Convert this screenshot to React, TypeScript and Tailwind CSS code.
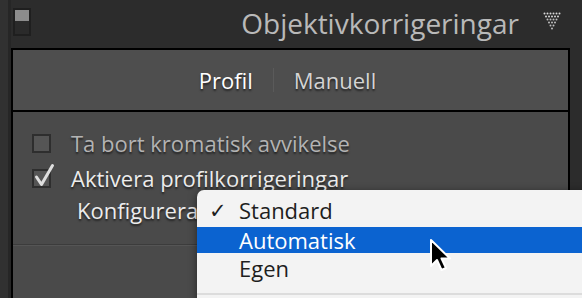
import React from "react";

const shadow = "[text-shadow:0_2px_2px_rgba(0,0,0,0.55)]";

const Checkbox = ({ checked }: { checked?: boolean }) => (
  <div className="relative w-[19px] h-[19px] border-2 border-[#2e2e2e] bg-[#555555] shrink-0">
    {checked && (
      <svg className="absolute -top-[8px] left-[0px]" width="22" height="24" viewBox="0 0 22 24">
        <path d="M2.5 14 L7.5 21.5 L18.5 2.5" fill="none" stroke="#dedede" strokeWidth="3" strokeLinecap="round" strokeLinejoin="round" />
      </svg>
    )}
  </div>
);

const DottedTriangle = () => {
  const dots: React.ReactElement[] = [];
  for (let r = 0; r < 6; r++) {
    for (let c = 0; c < 6 - r; c++) {
      dots.push(<circle key={`${r}-${c}`} cx={1.5 + c * 3 + r * 1.5} cy={1.5 + r * 3} r="1" fill={r < 2 ? "#d8d8d8" : "#bdbdbd"} />);
    }
  }
  return (
    <svg width="19" height="18" viewBox="0 0 19 18">
      {dots}
    </svg>
  );
};

const Cursor = () => (
  <svg width="26" height="38" viewBox="0 0 26 38">
    <path d="M2 2 L2 28 L8 22 L12.5 32 L17 30 L12.5 20.5 L21 20.5 Z" fill="#000" stroke="#fff" strokeWidth="2" strokeLinejoin="round" />
  </svg>
);

export default function App() {
  return (
    <div
      className="relative w-[582px] h-[298px] overflow-hidden bg-[#2c2c2c] flex"
      style={{ fontFamily: "'Open Sans', Lato, sans-serif" }}
    >
      <div className="w-[11px] shrink-0 bg-[#313131] border-r-[3px] border-[#262626]" />
      <div className="flex-1 flex flex-col">
        <div className="h-[48px] flex items-start shrink-0">
          <div className="mt-[8px] ml-[2px] w-[18px] h-[28px] border-2 border-[#1f1f1f] flex flex-col">
            <div className="h-[11px] bg-[#8c8c8c]" />
            <div className="flex-1 bg-[#2a2a2a]" />
          </div>
          <div className="ml-auto mt-[5px] text-[28px] leading-[36px] text-[#b9b9b9]">
            Objektivkorrigeringar
          </div>
          <div className="ml-[24px] mr-[8px] mt-[12px]">
            <DottedTriangle />
          </div>
        </div>
        <div className="w-[559px] flex-1 border-2 border-black border-b-0 bg-[#4a4a4a] flex flex-col">
          <div className="h-[62px] shrink-0 bg-[#4e4e4e] border-b-2 border-black flex items-center justify-center pr-[6px] text-[22px]">
            <span className={`text-white ${shadow}`}>Profil</span>
            <span className="mx-[20px] w-[1px] h-[24px] bg-[#3c3c3c] border-r border-[#5a5a5a]" />
            <span className={`text-[#d4d4d4] ${shadow}`}>Manuell</span>
          </div>
          <div className="flex flex-col pt-[17px] text-[22px]">
            <div className="flex items-center h-[28px] pl-[19px] gap-[20px]">
              <Checkbox />
              <span className={`text-[#b3b3b3] ${shadow}`}>Ta bort kromatisk avvikelse</span>
            </div>
            <div className="flex items-center h-[28px] mt-[7px] pl-[19px] gap-[20px]">
              <Checkbox checked />
              <span className={`text-[#ececec] ${shadow}`}>Aktivera profilkorrigeringar</span>
            </div>
            <div className="flex items-center h-[28px] mt-[4px] pl-[64px]">
              <span className={`text-[#ececec] ${shadow}`}>Konfigurera</span>
            </div>
            <div className="mt-[20px] h-[2px] bg-[#3c3c3c] border-b border-[#555555]" />
          </div>
        </div>
      </div>
      <div className="w-[12px] shrink-0" />

      <div className="absolute left-[197px] top-[190px] w-[400px] h-[120px] bg-[#f3f3f3] rounded-tl-[7px] shadow-[0_2px_8px_rgba(0,0,0,0.5)] text-[22px] text-[#1e1e1e] pt-[4px]">
        <div className="h-[33px] flex items-center">
          <span className="w-[42px] pl-[12px] text-[21px]">✓</span>
          <span>Standard</span>
        </div>
        <div className="h-[26px] flex items-center bg-[#0b63d0] text-white">
          <span className="w-[42px]" />
          <span>Automatisk</span>
        </div>
        <div className="h-[30px] flex items-center">
          <span className="w-[42px]" />
          <span>Egen</span>
        </div>
        <div className="mt-[10px] h-[2px] bg-[#dcdcdc]" />
      </div>

      <div className="absolute left-[429px] top-[238px]">
        <Cursor />
      </div>
    </div>
  );
}
